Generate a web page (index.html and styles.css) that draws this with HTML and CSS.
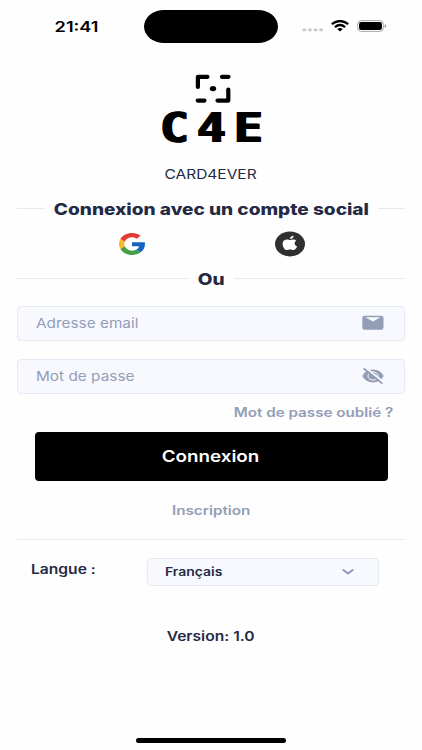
FILE: index.html
```html
<!DOCTYPE html>
<html lang="fr">
<head>
<meta charset="utf-8">
<title>CARD4EVER</title>
<meta name="viewport" content="width=device-width">
<link rel="stylesheet" href="styles.css">
</head>
<body>
<header class="status">
  <div class="status-time"><span class="wide time">21:41</span></div>
  <div class="island"></div>
  <div class="status-icons">
    <svg class="dots" width="22" height="4" viewBox="0 0 22 4" fill="#c8c8c8"><rect x="0.5" y=".5" width="3.6" height="2.8" rx="1"/><rect x="6.1" y=".5" width="3.6" height="2.8" rx="1"/><rect x="11.7" y=".5" width="3.6" height="2.8" rx="1"/><rect x="17.3" y=".5" width="3.6" height="2.8" rx="1"/></svg>
    <svg class="wifi" width="18" height="12" viewBox="0 0 18 12" fill="none" stroke="#000" stroke-width="2.2"><path d="M.8 4.2Q9-2.2 17.2 4.2M3.8 7.1Q9 2.9 14.2 7.1"/><path d="M6.2 9.1Q9 7 11.8 9.1L9 11.6Z" fill="#000" stroke="none"/></svg>
    <svg class="battery" width="30" height="12" viewBox="0 0 30 12"><rect x=".6" y=".6" width="25.8" height="10.8" rx="3.6" fill="#fff" stroke="#a8a8a8"/><rect x="2" y="2" width="23" height="8" rx="2.2"/><path d="M27.7 4.2Q29.3 4.6 29.3 6T27.7 7.8Z" fill="#929292"/></svg>
  </div>
</header>
<main>
  <section class="brand">
    <svg class="scan" width="36" height="30" viewBox="0 0 36 30" fill="none" stroke="#000" stroke-width="4.2" stroke-linecap="round" stroke-linejoin="round"><path d="M2.9 13V2.8H12.5M27 2.8H33.5M33.3 15.5V26.6H22.5M2.7 26.6H9.5"/><ellipse cx="18" cy="14.6" rx="3.2" ry="2.6" fill="#000" stroke="none"/></svg>
    <div class="mark"><span>C</span><span>4</span><span>E</span></div>
    <div class="name"><span class="wide">CARD4EVER</span></div>
  </section>
  <h1 class="rule social-title"><span class="rule-text"><span class="wide">Connexion avec un compte social</span></span></h1>
  <div class="social">
    <svg class="google" width="26" height="22" viewBox="0 0 48 48" preserveAspectRatio="none"><path fill="#e53935" d="M2.6 13.2C6.5 5.3 14.6 0 24 0c6 0 11.5 2.2 15.8 6l-6.8 6.8c-2.4-2-5.5-3.3-9-3.3-6.2 0-11.4 4-13.3 9.5z"/><path fill="#fbb72c" d="M10.7 19.2a14.5 14.5 0 0 0 0 9.6l-8 6.1a24 24 0 0 1 0-21.8z"/><path fill="#43a047" d="M10.7 28.8C12.6 34.5 17.8 38.5 24 38.5c3.2 0 6-.8 8.2-2.3l7.6 6C35.5 46 30 48 24 48c-9.4 0-17.4-5.3-21.3-13.1z"/><path fill="#1565c0" d="M24 20h23.5c.3 1.3.5 2.7.5 4 0 7.8-3 14-8.2 18.2l-7.6-6c2.5-1.6 4.2-4.1 4.8-7.2H24z"/></svg>
    <svg class="apple" width="32" height="26" viewBox="0 0 32 26"><ellipse cx="16" cy="13" rx="15" ry="12.5" fill="#303030"/><path fill="#fff" d="M22.2 9.7C21.3 8.7 19.9 8.3 18.7 8.5 17.6 8.7 17 9.1 16.2 9.1 15.2 9.1 14.2 8.3 12.7 8.4 10.2 8.5 8.5 10.3 8.6 13 8.7 15.9 10.7 19 12.8 19.1 13.9 19.1 14.5 18.4 16.1 18.4S18.2 19.1 19.3 19.1C21.1 19 22.7 16.8 23.1 15.3 21.7 14.9 20.7 13.8 20.7 12.4 20.7 11.2 21.3 10.3 22.2 9.7Z"/><path fill="#fff" d="M19.6 4.7C19.8 6.3 18 8 15.9 8 15.8 6.3 17.6 4.9 19.6 4.7Z"/></svg>
  </div>
  <div class="rule or"><span class="rule-text"><span class="wide">Ou</span></span></div>
  <form class="fields">
    <label class="field"><span class="wide left">Adresse email</span>
      <svg width="22" height="16" viewBox="0 0 22 16"><rect x=".3" y=".8" width="21.2" height="14" rx="2.2" fill="#929db6"/><path d="M3.3 2.3H18.6L11 6.500Z" fill="#f7f9fe"/></svg></label>
    <label class="field"><span class="wide left">Mot de passe</span>
      <svg width="22" height="18" viewBox="0 0 22 18"><path d="M.3 9Q3.8 2.6 11 2.6T21.7 9Q18.2 15.4 11 15.4T.3 9Z" fill="#929db6"/><ellipse cx="11" cy="9" rx="5" ry="4.1" fill="none" stroke="#f7f9fe" stroke-width="1"/><path d="M3.1 .2L22 15.5" stroke="#f7f9fe" stroke-width="1.8"/><path d="M1.600 1.400L20.4 16.6" stroke="#929db6" stroke-width="1.8"/></svg></label>
  </form>
  <div class="forgot"><span class="wide">Mot de passe oublié ?</span></div>
  <div class="submit"><span class="wide">Connexion</span></div>
  <div class="signup"><span class="wide">Inscription</span></div>
  <div class="language">
    <div class="language-label"><span class="wide left">Langue :</span></div>
    <div class="select"><span class="wide left">Français</span>
      <svg width="12" height="8" viewBox="0 0 12 8" fill="none" stroke="#8e9ab3" stroke-width="1.9" stroke-linecap="round" stroke-linejoin="round"><path d="M1.3 2L6 5.600L10.7 2"/></svg></div>
  </div>
  <div class="version"><span class="wide">Version: 1.0</span></div>
</main>
<div class="home"></div>
</body>
</html>
```
FILE: styles.css
```css
* { box-sizing: border-box; }
body {
  margin: 0;
  width: 422px;
  height: 750px;
  overflow: hidden;
  display: flex;
  flex-direction: column;
  background: #fefefe;
  color: #242a45;
  font-family: Inter, "Liberation Sans", sans-serif;
}
svg { display: block; flex: none; }
.wide {
  display: inline-block;
  white-space: nowrap;
  transform: scaleX(1.2);
}
.left { transform-origin: left center; }

.status { height: 52px; display: flex; align-items: center; flex: none; }
.status-time {
  width: 144px;
  padding-left: 10px;
  text-align: center;
  color: #000;
  font-size: 14.5px;
  font-weight: 600;
}
.time { transform: scaleX(1.25); }
.island { width: 134px; height: 33px; border-radius: 20px / 16.5px; background: #000; }
.status-icons { display: flex; align-items: center; padding-left: 24px; }
.dots { margin-top: 8px; }
.wifi { margin-left: 7px; }
.battery { margin-left: 8px; }

main { padding: 0 17px; flex: 1; min-height: 0; }
.brand { height: 144px; padding-top: 22px; display: flex; flex-direction: column; align-items: center; }
.scan { margin-left: 4px; }
.mark {
  display: flex;
  height: 40px;
  margin-top: 4px;
  color: #000;
  font: bold 40px/40px "DejaVu Sans Mono", monospace;
  text-shadow: -1px 0 #000, 1px 0 #000;
}
.mark span { width: 37px; text-align: center; transform: scaleX(1.2); }
.name { margin-top: 17px; font-size: 13.3px; line-height: 18px; }
.name .wide { transform: scaleX(1.165); }

.rule {
  display: flex;
  align-items: center;
  height: 25px;
  margin: 0;
  font-size: 16px;
  font-weight: 800;
}
.rule::before, .rule::after { content: ""; flex: 1; height: 1px; background: #e7e8ec; }
.rule-text { width: 333px; text-align: center; }
.rule .wide { transform: scaleX(1.19); }
.or .rule-text { width: 45px; }

.social { display: grid; grid-template-columns: 1fr 1fr; height: 45px; align-items: center; padding: 0 36px; }
.google, .apple { justify-self: center; }

.fields { display: flex; flex-direction: column; gap: 18px; margin-top: 15px; }
.field {
  display: flex;
  align-items: center;
  justify-content: space-between;
  height: 35px;
  padding: 0 20px 1px 18px;
  border: 1px solid #e6eaf4;
  border-radius: 4px;
  background: #f7f9fe;
  color: #929db6;
  font-size: 13.3px;
}
.field .wide { transform: scaleX(1.155); }
.forgot {
  margin: 9px 12px 0 0;
  height: 20px;
  text-align: right;
  font-size: 12.5px;
  line-height: 20px;
  font-weight: 600;
  color: #929db6;
}
.forgot .wide { transform: scaleX(1.215); transform-origin: right center; }
.submit {
  height: 49px;
  margin: 9px 17.5px 0;
  border-radius: 4px;
  background: #000;
  color: #fff;
  text-align: center;
  font-size: 16px;
  line-height: 49px;
  font-weight: 600;
}
.submit .wide { transform: scaleX(1.175); }
.signup {
  height: 59px;
  border-bottom: 1px solid #e7e8ec;
  text-align: center;
  color: #929db6;
  font-size: 12.5px;
  line-height: 59px;
  font-weight: 600;
}
.signup .wide { transform: scaleX(1.22); }
.language { display: flex; padding: 18px 26px 0 14px; justify-content: space-between; }
.language-label { font-size: 13px; line-height: 22px; font-weight: 600; }
.select {
  display: flex;
  align-items: center;
  justify-content: space-between;
  width: 232px;
  height: 28px;
  padding: 0 24px 0 17px;
  border: 1px solid #e6eaf4;
  border-radius: 4px;
  background: #f7f9fe;
  font-size: 11.8px;
  font-weight: 600;
}
.select .wide { transform: scaleX(1.18); }
.version { margin-top: 40px; text-align: center; font-size: 13px; line-height: 20px; font-weight: 600; }
.home { flex: none; width: 150px; height: 5px; margin: 0 auto 7px; border-radius: 3px; background: #000; }
```
